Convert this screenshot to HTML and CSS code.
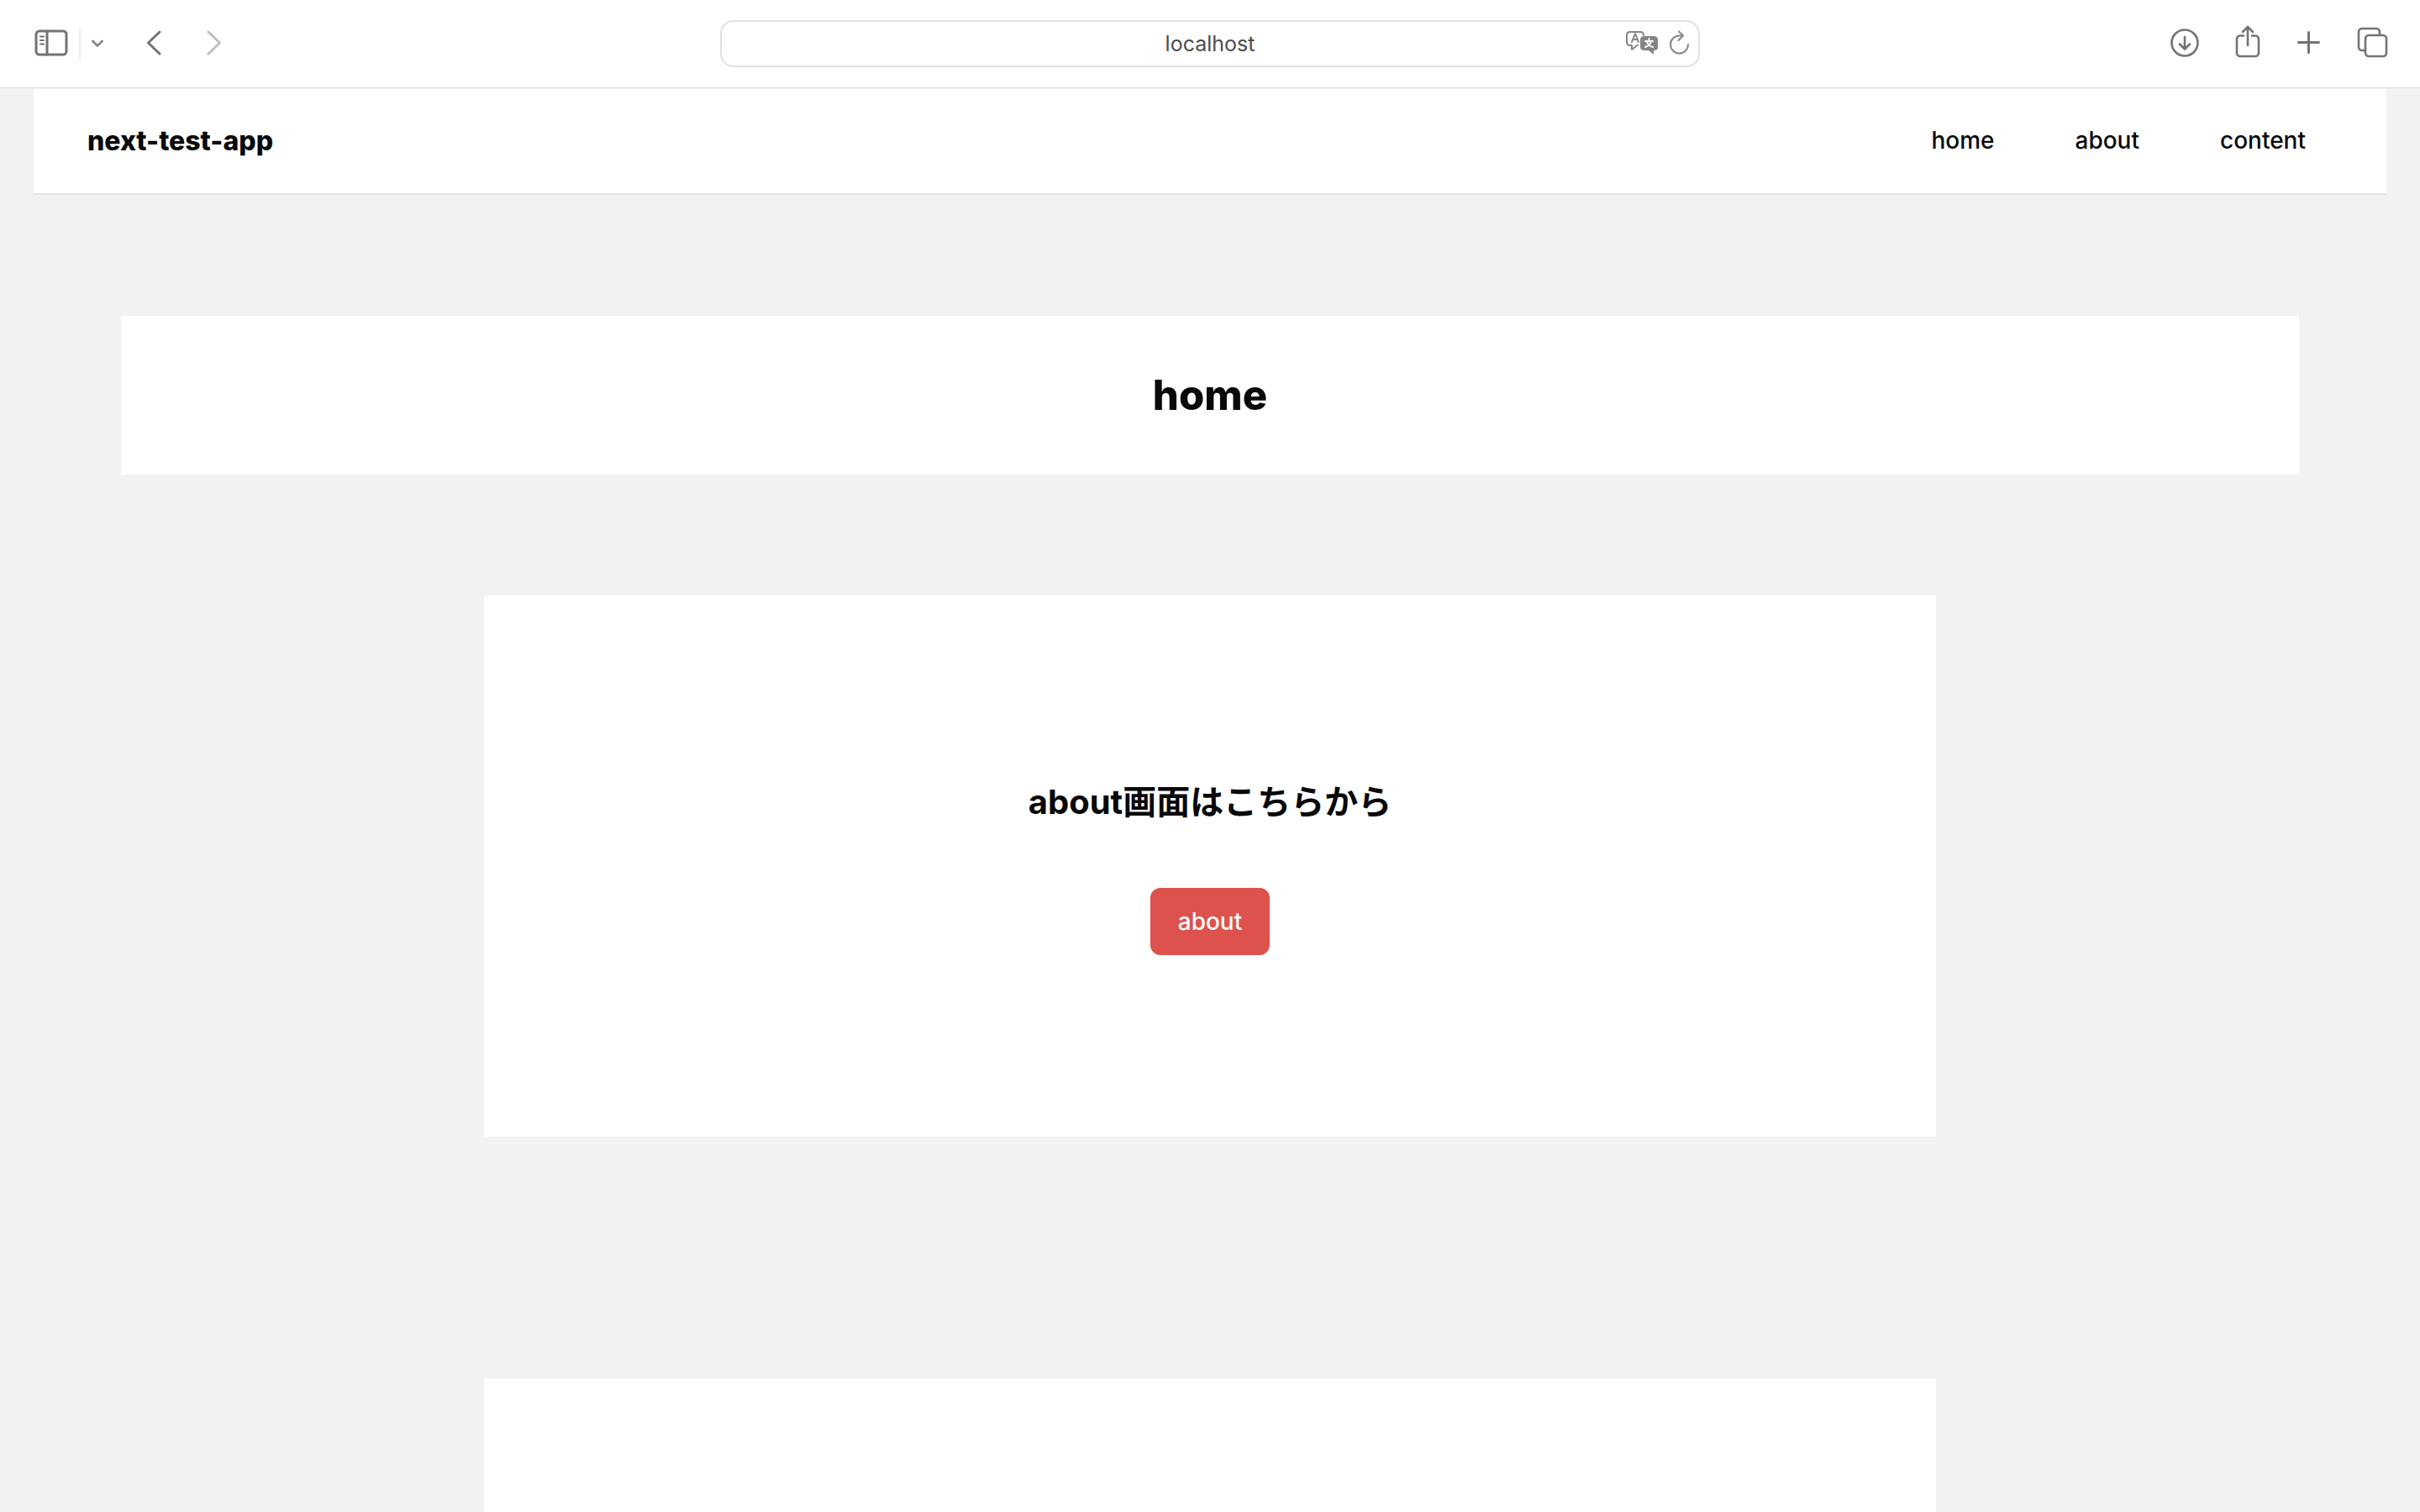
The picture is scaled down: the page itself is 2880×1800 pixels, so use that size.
FILE: index.html
```html
<!DOCTYPE html>
<html lang="ja">
    <head>
        <meta charset="utf-8">
        <title>next-test-app</title>
        <meta name="viewport" content="width=device-width" />
        <link rel="stylesheet" href="styles.css">
    </head>
    <body>
        <div class="toolbar">
            <div class="tools">
                <button type="button" aria-label="Sidebar">
                    <svg width="48" height="48" viewBox="0 0 48 48">
                        <rect x="5" y="9" width="36" height="28" rx="4"/>
                        <path d="M18 9v28"/>
                        <path class="thin" d="M10 15.500h4M10 20h4M10 24.500h4"/>
                    </svg>
                </button>
                <span class="divider"></span>
                <button type="button" class="tab-groups" aria-label="Tab groups">
                    <svg width="24" height="48" viewBox="0 0 24 48">
                        <path d="M6.500 21l5.500 5.500 5.500-5.500"/>
                    </svg>
                </button>
                <div class="history">
                    <button type="button" aria-label="Back">
                        <svg width="48" height="48" viewBox="0 0 48 48"><path d="M30 10L16.500 23 30 36"/></svg>
                    </button>
                    <button type="button" class="forward" aria-label="Forward">
                        <svg width="48" height="48" viewBox="0 0 48 48"><path d="M16 10l13.500 13L16 36"/></svg>
                    </button>
                </div>
            </div>

            <form id="address" class="address">
                <input type="text" value="localhost" aria-label="Address" />
                <button type="button" aria-label="Translate">
                    <svg width="40" height="32" viewBox="0 0 40 32">
                        <path class="thin" d="M16 17.500L9 23v-5H7c-2.500 0-4-1.500-4-4V6c0-2.500 1.500-4 4-4h12c2.500 0 4 1.500 4 4"/>
                        <path class="thin" d="M9 14l4-10 4 10M10.500 11h5"/>
                        <path class="solid" d="M24 7h11c3 0 5 1.500 5 4v9c0 3-1.500 4-5 4v5l-6-5h-5c-3 0-5-1.500-5-4v-9c0-2.500 2-4 5-4z"/>
                        <path class="knockout" d="M29.500 10v3M25 13h9M32 13c-1 4-4 6-7 7M27 14c1 3 4 5 7 6"/>
                    </svg>
                </button>
                <button type="button" aria-label="Reload">
                    <svg width="32" height="32" viewBox="0 0 32 32">
                        <path class="thin" d="M28 17a10.500 10.500 0 1 1-10.500-10.500h4M17 1.500l5 5-5.500 5.500"/>
                    </svg>
                </button>
            </form>

            <div class="tools actions">
                <button type="button" aria-label="Downloads">
                    <svg width="48" height="48" viewBox="0 0 48 48">
                        <circle class="medium" cx="22" cy="23" r="15.500"/>
                        <path class="medium" d="M22 16v14M16 24.500l6 6 6-6"/>
                    </svg>
                </button>
                <button type="button" aria-label="Share">
                    <svg width="48" height="48" viewBox="0 0 48 48">
                        <path class="medium" d="M18 14.500h-4a4 4 0 0 0-4 4V35a4 4 0 0 0 4 4h18a4 4 0 0 0 4-4V18.500a4 4 0 0 0-4-4h-4"/>
                        <path class="medium" d="M23 26V5M17 10l6-6 6 6"/>
                    </svg>
                </button>
                <button type="button" aria-label="New tab">
                    <svg width="48" height="48" viewBox="0 0 48 48"><path d="M9.500 22.500h24M21.500 10.500v24"/></svg>
                </button>
                <button type="button" aria-label="Show all tabs">
                    <svg width="48" height="48" viewBox="0 0 48 48">
                        <path class="medium" d="M14 32h-3a4 4 0 0 1-4-4V10a4 4 0 0 1 4-4h17a4 4 0 0 1 4 4v3"/>
                        <rect class="medium" x="15" y="14" width="25" height="25" rx="4"/>
                    </svg>
                </button>
            </div>
        </div>

        <header class="header">
            <a class="logo" href="#">next-test-app</a>
            <nav>
                <a href="#">home</a>
                <a href="#about">about</a>
                <a href="#content">content</a>
            </nav>
        </header>

        <main>
            <h1>home</h1>

            <section class="card" id="about">
                <h2>about画面はこちらから</h2>
                <a class="btn" href="#about">about</a>
            </section>

            <section class="card" id="content"></section>
        </main>

        <script>
            document.getElementById("address").addEventListener("submit", function (e) {
                e.preventDefault();
            });
        </script>
    </body>
</html>
```
FILE: styles.css
```css
* {
    box-sizing: border-box;
}

html {
    height: 100%;
    overflow: hidden;
}

body {
    height: 100%;
    margin: 0;
    overflow: hidden;
    color: #09090b;
    background: #f2f2f2;
    font-family: Inter, "Noto Sans CJK JP", sans-serif;
    font-size: 28px;
}

a {
    color: inherit;
    text-decoration: none;
}

button {
    display: flex;
    padding: 0;
    border: 0;
    background: none;
    color: #737373;
}

svg {
    fill: none;
    stroke: currentColor;
    stroke-width: 3;
    stroke-linecap: round;
    stroke-linejoin: round;
}

.medium {
    stroke-width: 2.6;
}

.thin {
    stroke-width: 2;
}

.solid {
    fill: currentColor;
    stroke: none;
}

.knockout {
    stroke: #fff;
    stroke-width: 2;
}

/* browser bar */
.toolbar {
    display: grid;
    grid-template-columns: 1fr minmax(0, 1166px) 1fr;
    align-items: center;
    height: 105px;
    padding: 0 32px;
    border-bottom: 1px solid #d9d9d9;
    background: #fff;
}

.tools {
    display: flex;
    align-items: center;
    gap: 8px;
    padding-left: 6px;
}

.actions {
    justify-content: flex-end;
    gap: 26px;
}

.divider {
    width: 2px;
    height: 36px;
    background: #ececec;
}

.tab-groups {
    color: #8a8a90;
}

.history {
    display: flex;
    gap: 24px;
    margin-left: 24px;
}

.forward {
    color: #bfbfbf;
}

.address {
    display: flex;
    align-items: center;
    gap: 8px;
    height: 56px;
    padding: 0 8px 0 96px;
    border: 2px solid #e0e0e0;
    border-radius: 16px;
}

.address input {
    flex: 1;
    min-width: 0;
    padding: 0;
    border: 0;
    outline: 0;
    background: none;
    color: #4d4d4d;
    font: inherit;
    font-size: 25px;
    text-align: center;
}

.address button {
    color: #858585;
}

/* page */
.header {
    display: flex;
    align-items: center;
    justify-content: space-between;
    height: 126px;
    margin: 1px 40px 0;
    padding: 0 48px 2px 64px;
    border-bottom: 2px solid #e4e4e4;
    background: #fff;
}

.logo {
    font-size: 32px;
    font-weight: 800;
}

nav {
    display: flex;
}

nav a {
    padding: 16px 48px;
    font-weight: 500;
}

main {
    display: flex;
    flex-direction: column;
    align-items: center;
}

h1 {
    width: 90%;
    margin: 5% 0 0;
    padding: 64px 0;
    background: #fff;
    font-size: 49px;
    font-weight: 800;
    line-height: 61px;
    text-align: center;
}

.card {
    width: 60%;
    min-height: 644px;
    margin: 5% 0;
    padding: 216px 0;
    background: #fff;
    text-align: center;
}

h2 {
    margin: 0 0 72px;
    font-size: 40px;
    line-height: 60px;
}

.btn {
    display: inline-block;
    padding: 0 33px;
    border-radius: 12px;
    background: #dd524c;
    color: #fafafa;
    font-weight: 500;
    line-height: 80px;
}
```
